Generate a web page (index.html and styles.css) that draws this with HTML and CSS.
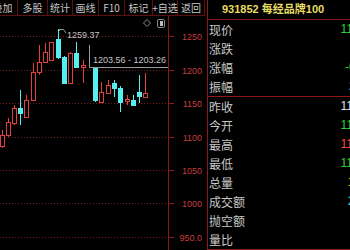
FILE: index.html
```html
<!DOCTYPE html>
<html lang="zh-CN">
<head>
    <meta charset="UTF-8">
    <meta name="viewport" content="width=device-width, initial-scale=1.0">
    <title>931852 每经品牌100</title>
    <link rel="stylesheet" href="styles.css">
</head>
<body>

<div class="screen">
    <!-- K-line side -->
    <div class="left">
        <div class="toolbar">
            <span class="tab tab-first">叠加</span>
            <span class="tab tab-wide">多股</span>
            <span class="tab tab-narrow">统计</span>
            <span class="tab">画线</span>
            <span class="tab">F10</span>
            <span class="tab tab-mid">标记</span>
            <span class="tab tab-narrow">+自选</span>
            <span class="tab tab-back">返回</span>
        </div>

        <svg class="chart" width="207" height="234" viewBox="0 16 207 234">
            <g class="grid">
                <line x1="0" y1="36.5" x2="168" y2="36.5"/>
                <line x1="0" y1="70.5" x2="168" y2="70.5"/>
                <line x1="0" y1="103.5" x2="168" y2="103.5"/>
                <line x1="0" y1="137.5" x2="168" y2="137.5"/>
                <line x1="0" y1="170.5" x2="168" y2="170.5"/>
                <line x1="0" y1="203.5" x2="168" y2="203.5"/>
                <line x1="0" y1="237.5" x2="168" y2="237.5"/>
            </g>
            <g class="ticks">
                <line x1="168" y1="36.5" x2="174" y2="36.5"/>
                <line x1="168" y1="70.5" x2="174" y2="70.5"/>
                <line x1="168" y1="103.5" x2="174" y2="103.5"/>
                <line x1="168" y1="137.5" x2="174" y2="137.5"/>
                <line x1="168" y1="170.5" x2="174" y2="170.5"/>
                <line x1="168" y1="203.5" x2="174" y2="203.5"/>
                <line x1="168" y1="237.5" x2="174" y2="237.5"/>
            </g>
            <line class="axis" x1="168.5" y1="16" x2="168.5" y2="250"/>

            <g class="axis-label">
                <text x="202" y="39.5">1250</text>
                <text x="202" y="73.5">1200</text>
                <text x="202" y="106.5">1150</text>
                <text x="202" y="140.5">1100</text>
                <text x="202" y="173.5">1050</text>
                <text x="202" y="206.5">1000</text>
                <text x="202" y="240.5">950.0</text>
            </g>

            <!-- small tool icons -->
            <path class="icon" d="M147 19.5l3.5 3.5-3.5 3.5-3.5-3.5z"/>
            <rect class="icon" x="157.5" y="19.5" width="7" height="8" rx="1.5"/>
            <rect class="icon-fill" x="160" y="21" width="3" height="5"/>

            <g id="candles"></g>

            <!-- price notes -->
            <path class="marker" d="M59.5 31V29.5H63.5L66 33"/>
            <text class="note" x="67" y="38">1259.37</text>
            <path class="marker" d="M89.5 45V67.5H168"/>
            <text class="note" x="93" y="63">1203.56 - 1203.26</text>
        </svg>
    </div>

    <!-- Quote panel -->
    <div class="quote">
        <div class="quote-title">931852 每经品牌100</div>
        <div class="quote-group">
            <div class="row"><span class="label">现价</span><span class="val down">1159.60</span></div>
            <div class="row"><span class="label">涨跌</span><span class="val down">-3.67</span></div>
            <div class="row"><span class="label">涨幅</span><span class="val down">-0.32%</span></div>
            <div class="row"><span class="label">振幅</span><span class="val flat">2.63%</span></div>
        </div>
        <div class="quote-group">
            <div class="row"><span class="label">昨收</span><span class="val flat">1163.27</span></div>
            <div class="row"><span class="label">今开</span><span class="val down">1162.14</span></div>
            <div class="row"><span class="label">最高</span><span class="val up">1178.53</span></div>
            <div class="row"><span class="label">最低</span><span class="val down">1147.85</span></div>
            <div class="row"><span class="label">总量</span><span class="val vol">1.35亿</span></div>
            <div class="row"><span class="label">成交额</span><span class="val amount">25.8亿</span></div>
            <div class="row"><span class="label">抛空额</span><span class="val flat"></span></div>
            <div class="row"><span class="label">量比</span><span class="val flat"></span></div>
        </div>
    </div>
</div>

<script>
// x, body top, body bottom, wick top, wick bottom, up/down
const candles = [
    [0, 135, 146, 130, 148, 'up'],
    [6, 122, 135, 118, 137, 'up'],
    [12, 108, 123, 105, 125, 'up'],
    [18, 108, 113, 90, 125, 'down'],
    [24, 100, 117, 95, 118, 'up'],
    [31, 72, 100, 63, 101, 'up'],
    [37, 62, 72, 45, 75, 'up'],
    [43, 52, 62, 43, 63, 'up'],
    [49, 42, 60, 42, 61, 'up'],
    [56, 39, 57, 29, 59, 'down'],
    [62, 57, 83, 56, 84, 'down'],
    [68, 53, 83, 52, 84, 'up'],
    [74, 53, 67, 42, 68, 'down'],
    [81, 65, 67, 60, 83, 'up'],
    [93, 67, 100, 67, 102, 'down'],
    [99, 92, 102, 82, 103, 'up'],
    [106, 85, 93, 80, 94, 'up'],
    [112, 83, 88, 80, 97, 'down'],
    [118, 88, 102, 86, 112, 'down'],
    [125, 99, 101, 95, 105, 'up'],
    [131, 100, 105, 95, 106, 'down'],
    [137, 92, 96, 75, 103, 'down'],
    [143, 93, 97, 73, 98, 'up']
];

const ns = 'http://www.w3.org/2000/svg';
const group = document.getElementById('candles');

candles.forEach(c => {
    const wick = document.createElementNS(ns, 'line');
    wick.setAttribute('x1', c[0] + 2.5);
    wick.setAttribute('x2', c[0] + 2.5);
    wick.setAttribute('y1', c[3]);
    wick.setAttribute('y2', c[4]);
    wick.setAttribute('class', 'wick ' + c[5]);
    group.appendChild(wick);

    const body = document.createElementNS(ns, 'rect');
    body.setAttribute('x', c[0] + 0.5);
    body.setAttribute('y', c[1] + 0.5);
    body.setAttribute('width', 4);
    body.setAttribute('height', Math.max(c[2] - c[1], 1));
    body.setAttribute('class', 'body ' + c[5]);
    group.appendChild(body);
});
</script>

</body>
</html>
```

FILE: styles.css
```css
* {
    box-sizing: border-box;
}
body {
    margin: 0;
    background-color: #000;
    overflow: hidden;
    font-family: "Liberation Sans", "Noto Sans CJK SC", sans-serif;
}
.screen {
    display: flex;
    width: 350px;
    height: 250px;
    overflow: hidden;
}

/* Left: toolbar + chart */
.left {
    flex: none;
    width: 207px;
}
.toolbar {
    display: flex;
    height: 16px;
}
.tab {
    flex: none;
    width: 26px;
    height: 16px;
    display: flex;
    align-items: center;
    justify-content: center;
    border-right: 1px solid #5e1010;
    border-bottom: 1px solid #5e1010;
    color: #c8c8c8;
    font-family: "Noto Sans CJK SC", sans-serif;
    font-size: 10px;
    white-space: nowrap;
}
.tab-first {
    width: 30px;
    margin-left: -12px;
}
.tab-wide {
    width: 30px;
}
.tab-narrow {
    width: 25px;
}
.tab-mid {
    width: 28px;
}
.tab-back {
    width: 27px;
}

.chart {
    display: block;
}
.grid line {
    stroke: #7a1c1c;
    stroke-dasharray: 1 2;
}
.ticks line,
.axis {
    stroke: #8c1a1a;
}
.axis-label text {
    fill: #c83c3c;
    font-family: "Liberation Sans", sans-serif;
    font-size: 9px;
    text-anchor: end;
}
.icon {
    fill: none;
    stroke: #8a8a8a;
}
.icon-fill {
    fill: #bcbcbc;
}
.note {
    fill: #c4c4c4;
    font-family: "Liberation Sans", sans-serif;
    font-size: 9px;
}
.marker {
    fill: none;
    stroke: #9a9a9a;
}

/* Candles */
.wick.up {
    stroke: #e04040;
}
.wick.down {
    stroke: #54f0f0;
}
.body.up {
    fill: #000;
    stroke: #e04040;
}
.body.down {
    fill: #54f0f0;
    stroke: #54f0f0;
}

/* Right: quote panel */
.quote {
    flex: none;
    width: 180px;
    padding-right: 4px;
    border-left: 1px solid #8c1a1a;
}
.quote-title {
    height: 20px;
    padding-left: 14px;
    border-bottom: 1px solid #8c1a1a;
    color: #e6dc64;
    font-size: 11px;
    font-weight: bold;
    line-height: 19px;
    white-space: nowrap;
}
.quote-group {
    border-bottom: 1px solid #8c1a1a;
}
.row {
    display: flex;
    justify-content: space-between;
    height: 19px;
    padding-left: 1px;
    font-size: 12px;
    line-height: 19px;
}
.label {
    color: #c8c8c8;
    font-family: "Noto Sans CJK SC", sans-serif;
}
.val {
    font-family: "Liberation Sans", "Noto Sans CJK SC", sans-serif;
}
.up {
    color: #ff4444;
}
.down {
    color: #30d030;
}
.flat {
    color: #e0e0e0;
}
.vol {
    color: #e0e000;
}
.amount {
    color: #40c8c8;
}
```
